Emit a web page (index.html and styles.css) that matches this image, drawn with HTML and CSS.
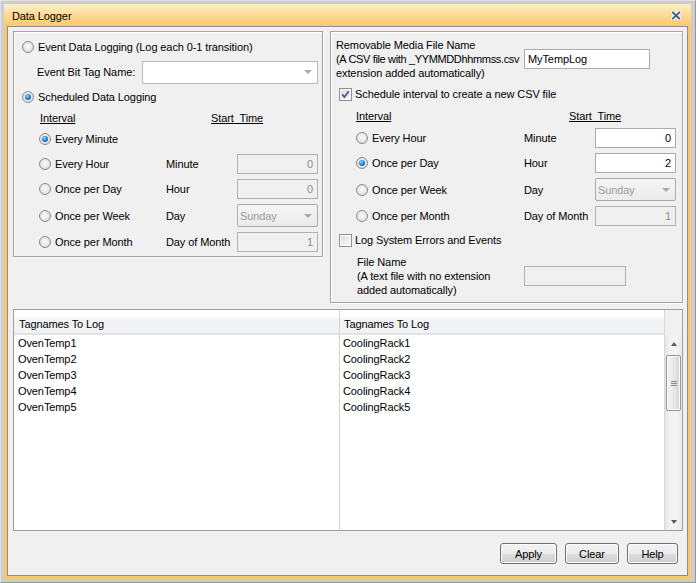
FILE: index.html
```
<!DOCTYPE html>
<html>
<head>
<meta charset="utf-8">
<title>Data Logger</title>
<link rel="stylesheet" href="styles.css">
</head>
<body>
<div class="window">
  <div class="frame">
    <div class="titlebar">
      <span class="title">Data Logger</span>
      <svg class="close" width="10" height="9" viewBox="0 0 10 9">
        <path d="M1.8 1.5 L8.2 7.5 M8.2 1.5 L1.8 7.5" stroke="#ffffff" stroke-width="3.4" stroke-linecap="square" fill="none"/>
        <path d="M1.8 1.5 L8.2 7.5 M8.2 1.5 L1.8 7.5" stroke="#2e5d8f" stroke-width="1.8" stroke-linecap="square" fill="none"/>
      </svg>
    </div>
    <div class="client">
      <div class="top">
        <div class="group left-group">
          <div class="row r-event"><span class="radio"></span><span>Event Data Logging (Log each 0-1 transition)</span></div>
          <div class="row r-tag"><span class="tag-label">Event Bit Tag Name:</span><div class="combo enabled tag-combo"><span class="arrow"></span></div></div>
          <div class="row r-sched"><span class="radio checked"></span><span>Scheduled Data Logging</span></div>
          <div class="hdr-row hdr-left"><span class="u ivl-l">Interval</span><span class="u">Start&nbsp; Time</span></div>
          <div class="sgrid sgrid-left">
            <div class="opt"><span class="radio checked"></span><span>Every Minute</span></div><span></span><span></span>
            <div class="opt"><span class="radio"></span><span>Every Hour</span></div><span>Minute</span><div class="field num disabled">0</div>
            <div class="opt"><span class="radio"></span><span>Once per Day</span></div><span>Hour</span><div class="field num disabled">0</div>
            <div class="opt"><span class="radio"></span><span>Once per Week</span></div><span>Day</span><div class="combo disabled"><span>Sunday</span><span class="arrow"></span></div>
            <div class="opt"><span class="radio"></span><span>Once per Month</span></div><span>Day of Month</span><div class="field num disabled">1</div>
          </div>
        </div>
        <div class="group right-group">
          <div class="media-row">
            <div class="media-text">Removable Media File Name<br><span class="tight">(A CSV file with _YYMMDDhhmmss.csv</span><br>extension added automatically)</div>
            <div class="field media">MyTempLog</div>
          </div>
          <div class="row chk-row">
            <span class="chk"><svg width="11" height="11" viewBox="0 0 11 11"><path d="M2.2 5.4 L4.4 8 L8.8 2.2" stroke="#4a5e95" stroke-width="1.9" fill="none"/></svg></span>
            <span>Schedule interval to create a new CSV file</span>
          </div>
          <div class="hdr-row hdr-right"><span class="u ivl-r">Interval</span><span class="u">Start&nbsp; Time</span></div>
          <div class="sgrid sgrid-right">
            <div class="opt"><span class="radio"></span><span>Every Hour</span></div><span>Minute</span><div class="field num">0</div>
            <div class="opt"><span class="radio checked"></span><span>Once per Day</span></div><span>Hour</span><div class="field num">2</div>
            <div class="opt"><span class="radio"></span><span>Once per Week</span></div><span>Day</span><div class="combo disabled"><span>Sunday</span><span class="arrow"></span></div>
            <div class="opt"><span class="radio"></span><span>Once per Month</span></div><span>Day of Month</span><div class="field num disabled">1</div>
          </div>
          <div class="row chk-row chk-row2">
            <span class="chk"></span>
            <span>Log System Errors and Events</span>
          </div>
          <div class="file-row">
            <div class="file-text">File Name<br>(A text file with no extension<br>added automatically)</div>
            <div class="field disabled file-field"></div>
          </div>
        </div>
      </div>
      <div class="list">
        <div class="col col1">
          <div class="hcell">Tagnames To Log</div>
          <div class="body">
            <div class="item">OvenTemp1</div>
            <div class="item">OvenTemp2</div>
            <div class="item">OvenTemp3</div>
            <div class="item">OvenTemp4</div>
            <div class="item">OvenTemp5</div>
          </div>
        </div>
        <div class="col col2">
          <div class="hcell">Tagnames To Log</div>
          <div class="body">
            <div class="item">CoolingRack1</div>
            <div class="item">CoolingRack2</div>
            <div class="item">CoolingRack3</div>
            <div class="item">CoolingRack4</div>
            <div class="item">CoolingRack5</div>
          </div>
        </div>
        <div class="sb-col">
          <div class="sb-head"></div>
          <div class="scrollbar">
            <div class="sb-btn"><span class="tri-up"></span></div>
            <div class="thumb"><span class="grip"></span></div>
            <div class="sb-fill"></div>
            <div class="sb-btn"><span class="tri-down"></span></div>
          </div>
        </div>
      </div>
      <div class="buttons">
        <div class="btn btn-apply">Apply</div>
        <div class="btn btn-clear">Clear</div>
        <div class="btn btn-help">Help</div>
      </div>
    </div>
  </div>
</div>
</body>
</html>
```
FILE: styles.css
```
html, body {
  margin: 0;
  padding: 0;
}
body {
  font-family: "Liberation Sans", Arial, sans-serif;
  font-size: 11px;
  letter-spacing: -0.1px;
  color: #000;
  background: #f0f0f0;
}
.window {
  width: 696px;
  height: 583px;
  box-sizing: border-box;
  border: 1px solid;
  border-color: #e2e2e2 #969696 #969696 #e2e2e2;
  background: #cdcdcd;
  padding: 2px 4px 3px 3px;
}
.frame {
  height: 100%;
  box-sizing: border-box;
  background: #f9c772;
  padding: 1px 0 3px 0;
  display: flex;
  flex-direction: column;
}
.titlebar {
  height: 22px;
  flex: none;
  display: flex;
  align-items: flex-start;
  background: linear-gradient(#fff0cf 0%, #fddc98 45%, #fbc86f 100%);
  padding-left: 8px;
}
.title {
  margin-top: 5px;
  line-height: 14px;
}
.close {
  margin-left: auto;
  margin-right: 10px;
  margin-top: 7px;
}
.client {
  flex: 1;
  margin: 0 3px;
  border: 1px solid #8e8e8e;
  background: #f0f0f0;
  padding: 4px 4px 0 5px;
  display: flex;
  flex-direction: column;
}
.top {
  display: flex;
  gap: 7px;
  align-items: flex-start;
}
.group {
  box-sizing: border-box;
  border: 1px solid #a3a3a3;
  box-shadow: inset 1px 1px 0 #ffffff, 1px 1px 0 #ffffff;
}
.left-group {
  width: 310px;
  height: 226px;
  padding: 7px 0 0 8px;
}
.right-group {
  width: 353px;
  height: 272px;
  padding: 6px 0 0 5px;
}
.row {
  display: flex;
  align-items: center;
}
.r-event, .r-sched {
  height: 16px;
}
.r-sched {
  margin-top: 7px;
}
.r-tag {
  height: 20px;
  margin-top: 7px;
  padding-left: 15px;
}
.tag-label {
  width: 105px;
}
.tag-combo {
  width: 176px;
  height: 20px;
}
.radio {
  flex: none;
  width: 12px;
  height: 12px;
  box-sizing: border-box;
  border-radius: 50%;
  border: 1px solid #8b8b8b;
  background: radial-gradient(circle at 50% 45%, #fbfbfb 0%, #e9e9e9 50%, #cfcfcf 100%);
  margin-right: 4px;
  position: relative;
}
.radio.checked::after {
  content: "";
  position: absolute;
  left: 2px;
  top: 2px;
  width: 6px;
  height: 6px;
  border-radius: 50%;
  background: radial-gradient(circle at 40% 35%, #9cdcff 0%, #2b86d2 45%, #0c4788 100%);
}
.hdr-row {
  display: flex;
  height: 14px;
  line-height: 14px;
}
.hdr-left {
  margin-top: 6px;
  padding-left: 18px;
}
.ivl-l {
  width: 171px;
}
.hdr-right {
  margin-top: 8px;
  padding-left: 20px;
}
.ivl-r {
  width: 213px;
}
.u {
  text-decoration: underline;
  white-space: nowrap;
}
.sgrid {
  display: grid;
  row-gap: 5px;
  align-items: center;
}
.sgrid-left {
  margin-top: 4px;
  margin-left: 17px;
  grid-template-columns: 127px 71px 81px;
  grid-template-rows: 20px 20px 20px 23px 20px;
}
.sgrid-right {
  margin-top: 5px;
  margin-left: 20px;
  grid-template-columns: 168px 71px 81px;
  grid-template-rows: 20px 20px 23px 20px;
}
.opt {
  display: flex;
  align-items: center;
}
.field {
  box-sizing: border-box;
  height: 20px;
  border: 1px solid #a9abaf;
  background: #ffffff;
  display: flex;
  align-items: center;
  padding: 0 4px 0 3px;
}
.field.num {
  justify-content: flex-end;
}
.field.disabled {
  background: #f0f0f0;
  border-color: #b1b1b1;
  color: #8c8c8c;
}
.combo {
  box-sizing: border-box;
  height: 23px;
  border: 1px solid #aaaaaa;
  border-radius: 2px;
  display: flex;
  align-items: center;
  padding-left: 2px;
}
.combo.disabled {
  background: linear-gradient(#f5f5f5, #ebebeb);
  color: #9b9b9b;
}
.combo.enabled {
  background: #ffffff;
  border-color: #b5b8bd;
  border-radius: 0;
}
.arrow {
  margin-left: auto;
  margin-right: 5px;
  width: 0;
  height: 0;
  border-left: 4px solid transparent;
  border-right: 4px solid transparent;
  border-top: 4px solid #a9a9a9;
}
.media-row {
  display: flex;
  align-items: flex-start;
}
.media-text {
  width: 188px;
  line-height: 14px;
  white-space: nowrap;
}
.tight {
  letter-spacing: -0.35px;
}
.media {
  width: 126px;
  margin-top: 11px;
}
.chk-row {
  height: 14px;
  margin-top: 7px;
  padding-left: 3px;
}
.chk-row2 {
  margin-top: 7px;
}
.chk {
  flex: none;
  width: 13px;
  height: 13px;
  box-sizing: border-box;
  border: 1px solid #8e8f8f;
  background: linear-gradient(135deg, #dcdee3 0%, #f7f8fa 100%);
  box-shadow: inset 0 0 0 1px #fdfdfd;
  margin-right: 3px;
  display: flex;
  align-items: center;
  justify-content: center;
}
.file-row {
  display: flex;
  align-items: flex-start;
  margin-top: 8px;
  padding-left: 21px;
}
.file-text {
  width: 167px;
  line-height: 14px;
  white-space: nowrap;
}
.file-field {
  width: 102px;
  margin-top: 11px;
}
.list {
  margin-top: 6px;
  width: 670px;
  height: 222px;
  box-sizing: border-box;
  border: 1px solid #a0a0a0;
  background: #ffffff;
  display: flex;
  flex: none;
}
.col {
  display: flex;
  flex-direction: column;
}
.col1 {
  width: 325px;
  border-right: 1px solid #d4d4d4;
}
.col2 {
  width: 324px;
}
.hcell {
  height: 17px;
  padding-top: 6px;
  line-height: 16px;
  background: linear-gradient(#ffffff 0%, #ffffff 35%, #f3f4f6 36%, #f1f2f4 100%);
  border-bottom: 2px solid #e2e3e5;
  white-space: nowrap;
}
.col1 .hcell {
  padding-left: 5px;
}
.col2 .hcell {
  padding-left: 4px;
}
.item {
  height: 16px;
  line-height: 16px;
}
.col1 .item {
  padding-left: 4px;
}
.col2 .item {
  padding-left: 3px;
}
.sb-col {
  width: 17px;
  border-left: 1px solid #d8d8d8;
  display: flex;
  flex-direction: column;
}
.sb-head {
  height: 25px;
  background: #f0f0f0;
  flex: none;
}
.scrollbar {
  flex: 1;
  display: flex;
  flex-direction: column;
  background: linear-gradient(to right, #e4e4e4, #f3f3f3 30%, #f3f3f3 70%, #e8e8e8);
}
.sb-btn {
  height: 17px;
  flex: none;
  display: flex;
  align-items: center;
  justify-content: center;
}
.tri-up {
  width: 0;
  height: 0;
  border-left: 3px solid transparent;
  border-right: 3px solid transparent;
  border-bottom: 4px solid #5e5e5e;
}
.tri-down {
  width: 0;
  height: 0;
  border-left: 3px solid transparent;
  border-right: 3px solid transparent;
  border-top: 4px solid #5e5e5e;
}
.thumb {
  flex: none;
  height: 56px;
  margin: 3px 1px 0 1px;
  box-sizing: border-box;
  border: 1px solid #979797;
  border-radius: 2px;
  background: linear-gradient(to right, #f4f4f4 0%, #e8e8e8 50%, #d6d6d6 100%);
  box-shadow: inset 0 0 0 1px #fafafa;
  display: flex;
  align-items: center;
  justify-content: center;
}
.grip {
  width: 6px;
  height: 1px;
  background: #8a8a8a;
  box-shadow: 0 2px 0 #8a8a8a, 0 4px 0 #8a8a8a;
  margin-top: -4px;
}
.sb-fill {
  flex: 1;
}
.buttons {
  display: flex;
  justify-content: flex-end;
  gap: 8px;
  margin-top: 12px;
  padding-right: 5px;
}
.btn {
  height: 21px;
  box-sizing: border-box;
  border: 1px solid #707070;
  border-radius: 3px;
  background: linear-gradient(#f2f2f2 0%, #ebebeb 50%, #dddddd 51%, #cfcfcf 100%);
  box-shadow: inset 0 0 0 1px #fbfbfb;
  display: flex;
  align-items: center;
  justify-content: center;
}
.btn-apply {
  width: 57px;
}
.btn-clear {
  width: 54px;
}
.btn-help {
  width: 51px;
}
```
